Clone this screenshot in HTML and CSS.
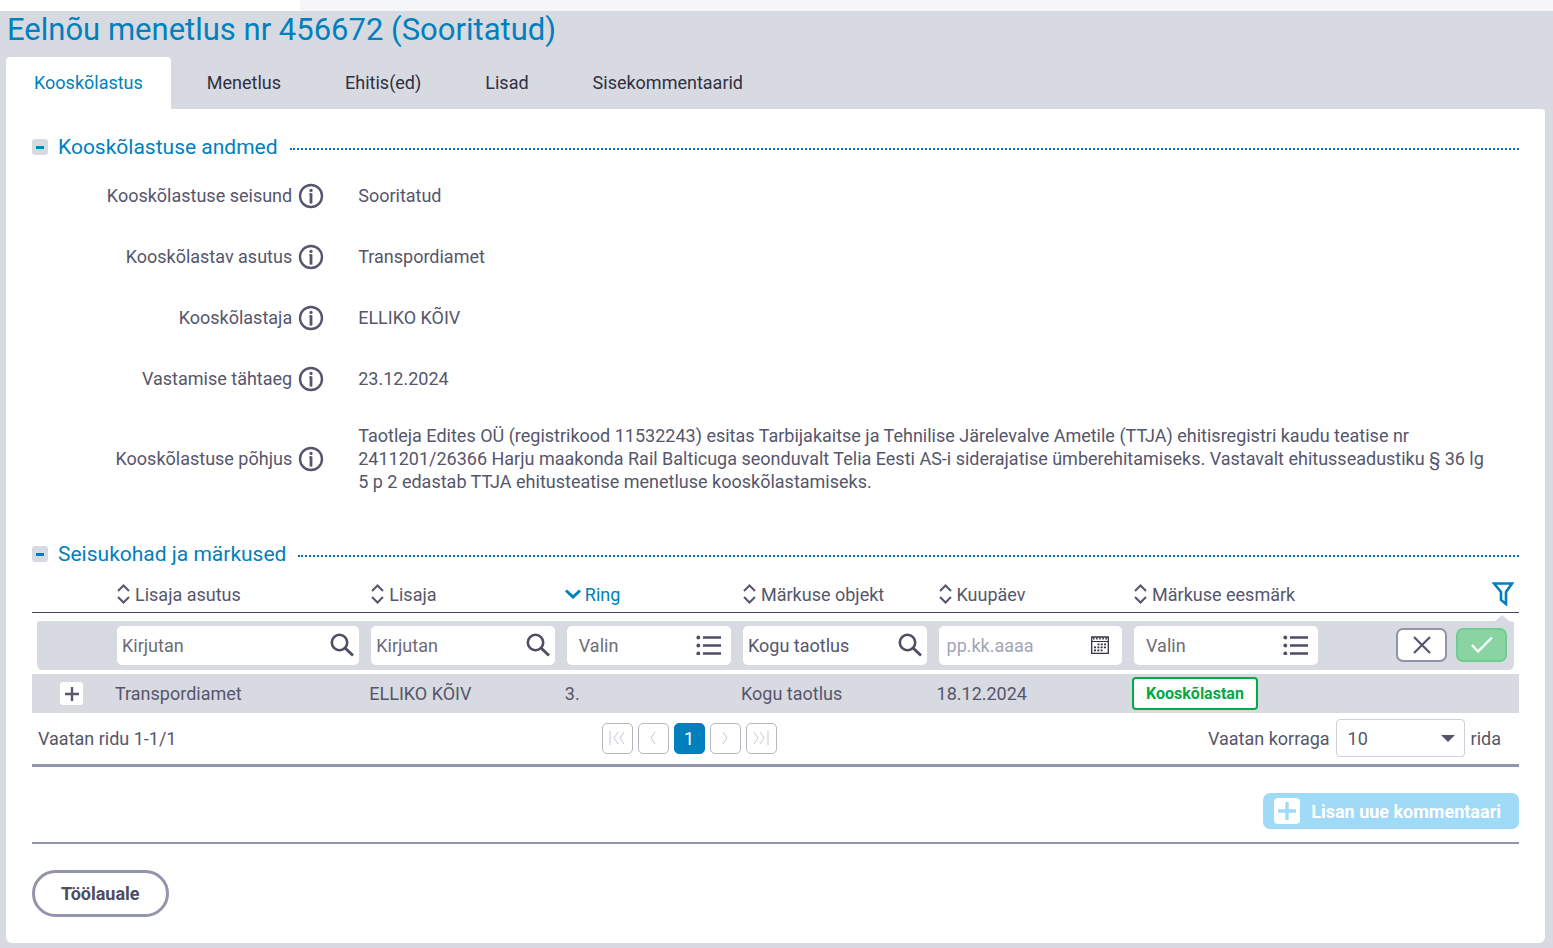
FILE: index.html
```html
<!DOCTYPE html>
<html lang="et">
<head>
    <meta charset="UTF-8">
    <meta name="viewport" content="width=device-width, initial-scale=1.0">
    <title>Eelnõu menetlus nr 456672</title>
    <link rel="stylesheet" href="styles.css">
</head>
<body>
    <svg class="sprite" aria-hidden="true">
        <symbol id="info" viewBox="0 0 26 26">
            <circle cx="13" cy="13" r="11" fill="none" stroke="currentColor" stroke-width="2.4"/>
            <circle cx="13" cy="7.4" r="1.6" fill="currentColor"/>
            <path d="M11.4 11H13v9.5" fill="none" stroke="currentColor" stroke-width="1.4"/>
            <path d="M13 10.4v10" stroke="currentColor" stroke-width="2.8"/>
        </symbol>
        <symbol id="sort" viewBox="0 0 13 20">
            <path d="M1 7l5.5-5.5L12 7M1 13l5.5 5.5L12 13" fill="none" stroke="currentColor" stroke-width="2"/>
        </symbol>
        <symbol id="search" viewBox="0 0 24 24">
            <circle cx="9.5" cy="9.5" r="7.7" fill="none" stroke="currentColor" stroke-width="2.6"/>
            <path d="M15 15l8 7.5" stroke="currentColor" stroke-width="3"/>
        </symbol>
        <symbol id="list" viewBox="0 0 26 20">
            <path d="M7 2.5h18M7 10.5h18M7 18.5h18" stroke="currentColor" stroke-width="2.4"/>
            <circle cx="2.3" cy="2.5" r="1.9" fill="currentColor"/>
            <circle cx="2.3" cy="10.5" r="1.9" fill="currentColor"/>
            <circle cx="2.3" cy="18.5" r="1.9" fill="currentColor"/>
        </symbol>
    </svg>

    <div class="top-bar"></div>
    <h1>Eelnõu menetlus nr 456672 (Sooritatud)</h1>

    <nav class="tabs">
        <a href="#" class="tab active">Kooskõlastus</a>
        <a href="#" class="tab">Menetlus</a>
        <a href="#" class="tab">Ehitis(ed)</a>
        <a href="#" class="tab">Lisad</a>
        <a href="#" class="tab">Sisekommentaarid</a>
    </nav>

    <main class="panel">
        <!-- Kooskõlastuse andmed -->
        <section>
            <div class="section-head">
                <button class="toggle" aria-label="Sulge Kooskõlastuse andmed"></button>
                <h2>Kooskõlastuse andmed</h2>
            </div>
            <dl class="details">
                <div class="detail">
                    <dt>Kooskõlastuse seisund <svg class="info"><use href="#info"/></svg></dt>
                    <dd>Sooritatud</dd>
                </div>
                <div class="detail">
                    <dt>Kooskõlastav asutus <svg class="info"><use href="#info"/></svg></dt>
                    <dd>Transpordiamet</dd>
                </div>
                <div class="detail">
                    <dt>Kooskõlastaja <svg class="info"><use href="#info"/></svg></dt>
                    <dd>ELLIKO KÕIV</dd>
                </div>
                <div class="detail">
                    <dt>Vastamise tähtaeg <svg class="info"><use href="#info"/></svg></dt>
                    <dd>23.12.2024</dd>
                </div>
                <div class="detail">
                    <dt>Kooskõlastuse põhjus <svg class="info"><use href="#info"/></svg></dt>
                    <dd>Taotleja Edites OÜ (registrikood 11532243) esitas Tarbijakaitse ja Tehnilise Järelevalve Ametile (TTJA) ehitisregistri kaudu teatise nr 2411201/26366 Harju maakonda Rail Balticuga seonduvalt Telia Eesti AS-i siderajatise ümberehitamiseks. Vastavalt ehitusseadustiku § 36 lg 5 p 2 edastab TTJA ehitusteatise menetluse kooskõlastamiseks.</dd>
                </div>
            </dl>
        </section>

        <!-- Seisukohad ja märkused -->
        <section class="comments">
            <div class="section-head">
                <button class="toggle" aria-label="Sulge Seisukohad ja märkused"></button>
                <h2>Seisukohad ja märkused</h2>
            </div>
            <table>
                <thead>
                    <tr class="head-row">
                        <th class="col-expand"></th>
                        <th class="col-org"><button class="sort"><svg class="sort-icon"><use href="#sort"/></svg>Lisaja asutus</button></th>
                        <th class="col-mid"><button class="sort"><svg class="sort-icon"><use href="#sort"/></svg>Lisaja</button></th>
                        <th class="col-ring"><button class="sort sorted"><svg class="sorted-icon" viewBox="0 0 16 10"><path d="M1 1.5l7 6.5 7-6.5" fill="none" stroke="currentColor" stroke-width="3"/></svg>Ring</button></th>
                        <th class="col-mid"><button class="sort"><svg class="sort-icon"><use href="#sort"/></svg>Märkuse objekt</button></th>
                        <th class="col-mid"><button class="sort"><svg class="sort-icon"><use href="#sort"/></svg>Kuupäev</button></th>
                        <th class="col-mid"><button class="sort"><svg class="sort-icon"><use href="#sort"/></svg>Märkuse eesmärk</button></th>
                        <th class="col-actions">
                            <button class="filter-btn" aria-label="Filter">
                                <svg viewBox="0 0 22 24"><path d="M2 1.5h18l-6 8.5v12l-5-4V10z" fill="none" stroke="currentColor" stroke-width="2.6"/></svg>
                            </button>
                        </th>
                    </tr>
                </thead>
                <tbody>
                    <tr class="filter-row">
                        <td></td>
                        <td><div class="field"><input type="text" placeholder="Kirjutan" aria-label="Lisaja asutus"><svg class="search"><use href="#search"/></svg></div></td>
                        <td><div class="field"><input type="text" placeholder="Kirjutan" aria-label="Lisaja"><svg class="search"><use href="#search"/></svg></div></td>
                        <td><button class="field pick">Valin<svg class="list"><use href="#list"/></svg></button></td>
                        <td><div class="field"><input type="text" value="Kogu taotlus" aria-label="Märkuse objekt"><svg class="search"><use href="#search"/></svg></div></td>
                        <td>
                            <div class="field date">
                                <input type="text" placeholder="pp.kk.aaaa" aria-label="Kuupäev">
                                <svg class="calendar" viewBox="0 0 18 18">
                                    <path d="M.7 1h16.6v16.3H.7z" fill="none" stroke="#333340" stroke-width="1.3"/>
                                    <path d="M1 5.5h16" stroke="#333340"/>
                                    <path d="M2 2.4h14" stroke="#333340" stroke-width="2" stroke-dasharray="1.5 1.6"/>
                                    <path d="M6.5 8.3h8.5M3 11.3h12M3 14.3h8.5" stroke="#333340" stroke-width="1.7" stroke-dasharray="2 1.3"/>
                                </svg>
                            </div>
                        </td>
                        <td><button class="field pick">Valin<svg class="list"><use href="#list"/></svg></button></td>
                        <td>
                            <div class="filter-actions">
                                <button class="clear" aria-label="Tühista"><svg viewBox="0 0 18 18"><path d="M1 1l16 16M17 1L1 17" stroke="currentColor" stroke-width="2.2"/></svg></button>
                                <button class="apply" aria-label="Rakenda"><svg viewBox="0 0 22 18"><path d="M1 9l6 6.5L21 1.5" fill="none" stroke="currentColor" stroke-width="2.4"/></svg></button>
                            </div>
                        </td>
                    </tr>
                    <tr class="data-row">
                        <td><button class="expand" aria-label="Ava rida"><svg viewBox="0 0 14 14"><path d="M7 0v14M0 7h14" stroke="currentColor" stroke-width="2.4"/></svg></button></td>
                        <td>Transpordiamet</td>
                        <td>ELLIKO KÕIV</td>
                        <td>3.</td>
                        <td>Kogu taotlus</td>
                        <td>18.12.2024</td>
                        <td><span class="badge">Kooskõlastan</span></td>
                        <td></td>
                    </tr>
                </tbody>
            </table>

            <div class="table-footer">
                <div>Vaatan ridu 1-1/1</div>
                <div class="pages">
                    <button class="page" aria-label="Esimene"><svg viewBox="0 0 16 14"><path d="M1 0v14M9 1L5 7l4 6M15 1l-4 6 4 6"/></svg></button>
                    <button class="page" aria-label="Eelmine"><svg viewBox="0 0 16 14"><path d="M10 1L6 7l4 6"/></svg></button>
                    <button class="page current">1</button>
                    <button class="page" aria-label="Järgmine"><svg viewBox="0 0 16 14"><path d="M6 1l4 6-4 6"/></svg></button>
                    <button class="page" aria-label="Viimane"><svg viewBox="0 0 16 14"><path d="M1 1l4 6-4 6M7 1l4 6-4 6M15 0v14"/></svg></button>
                </div>
                <div class="per-page">
                    <label for="rows">Vaatan korraga</label>
                    <div class="select">
                        <select id="rows">
                            <option>10</option>
                            <option>25</option>
                            <option>50</option>
                        </select>
                    </div>
                    <span>rida</span>
                </div>
            </div>
        </section>

        <div class="add-row">
            <button class="add" disabled>
                <svg viewBox="0 0 26 26"><rect width="26" height="26" rx="4" fill="#fff"/><path d="M13 4v18M4 13h18" stroke="#9fdaf6" stroke-width="3.4"/></svg>
                Lisan uue kommentaari
            </button>
        </div>

        <div class="bottom-row">
            <a href="#" class="back">Töölauale</a>
        </div>
    </main>
</body>
</html>
```
FILE: styles.css
```css
* {
    box-sizing: border-box;
}
body {
    margin: 0;
    padding-bottom: 5px;
    background: #d8dae2;
    color: #55566b;
    font-family: Roboto, sans-serif;
    font-size: 18px;
    line-height: 23px;
}
button, input, select {
    font: inherit;
    color: inherit;
}
button {
    padding: 0;
    border: none;
    background: none;
    cursor: pointer;
}
svg {
    flex: none;
}
.sprite {
    display: none;
}

.top-bar {
    height: 11px;
    background: linear-gradient(to right, #fff 300px, #f6f6f9 300px);
}
h1 {
    margin: 0;
    padding: 0 7px;
    font-size: 31px;
    font-weight: 400;
    line-height: 38px;
    color: #0080bd;
}
.tabs {
    display: flex;
    gap: 8px;
    margin: 8px 6px 0;
}
.tab {
    padding: 14px 28px 15px;
    border-radius: 4px 4px 0 0;
    color: #2f3040;
    text-decoration: none;
}
.tab.active {
    background: #fff;
    color: #0080bd;
}

.panel {
    margin: 0 8px 0 6px;
    padding: 26px 26px;
    background: #fff;
    border-radius: 0 4px 6px 6px;
}

.section-head {
    display: flex;
    align-items: center;
}
.section-head::after {
    content: "";
    flex: 1;
    margin: 4px 0 0 12px;
    border-top: 2px dotted #0075b4;
}
.toggle {
    display: flex;
    align-items: center;
    justify-content: center;
    width: 16px;
    height: 16px;
    margin-right: 10px;
    border-radius: 3px;
    background: #d8dae2;
}
.toggle::before {
    content: "";
    width: 8px;
    height: 3px;
    background: #0080bd;
}
h2 {
    margin: 0;
    font-size: 21px;
    font-weight: 400;
    line-height: 24px;
    color: #0080bd;
}

/* label / value rows */
.details {
    margin: 6px 0 0;
}
.detail {
    display: flex;
    align-items: center;
    gap: 34px;
    min-height: 61px;
    padding: 15px 26px 15px 0;
}
dt {
    display: flex;
    flex: none;
    align-items: center;
    justify-content: flex-end;
    gap: 6px;
    width: 20%;
}
dd {
    flex: 1;
    margin: 0;
}
.info {
    width: 26px;
    height: 26px;
}

/* table */
.comments {
    margin-top: 34px;
}
table {
    width: 100%;
    margin-top: 10px;
    table-layout: fixed;
    border-spacing: 0;
}
th, td {
    padding: 0 5px;
    text-align: left;
    font-weight: 400;
}
.head-row th {
    height: 37px;
    border-bottom: 1px solid #44465c;
}
.col-expand {
    width: 78px;
}
.col-org {
    width: 17.1%;
}
.col-mid {
    width: 13.15%;
}
.col-ring {
    width: 11.85%;
}
.sort {
    display: flex;
    align-items: center;
    gap: 5px;
    padding-left: 2px;
    white-space: nowrap;
}
.sort-icon {
    width: 13px;
    height: 20px;
}
.sorted {
    gap: 4px;
    padding-left: 0;
    color: #0080bd;
}
.sorted-icon {
    width: 16px;
    height: 10px;
}
.col-actions {
    text-align: right;
}
.filter-btn {
    display: block;
    margin-left: auto;
    color: #0080bd;
}
.filter-btn svg {
    display: block;
    width: 22px;
    height: 24px;
}
.filter-row td {
    height: 61px;
    padding: 4px 5px 5px 7px;
    border: 0 solid transparent;
    border-width: 8px 0 4px;
    background: #d8dae2;
    background-clip: padding-box;
}
.filter-row td:first-child {
    border-left-width: 5px;
    border-radius: 10px 0 0 10px;
}
.filter-row td:last-child {
    position: relative;
    border-right-width: 5px;
    border-radius: 0 10px 10px 0;
}
/* arrow that points at the filter icon */
.filter-row td:last-child::before {
    content: "";
    position: absolute;
    top: -6px;
    right: 5px;
    border: 7px solid transparent;
    border-top: 0;
    border-bottom: 6px solid #d8dae2;
}
.field {
    display: flex;
    align-items: center;
    width: 100%;
    height: 39px;
    padding: 0 5px;
    border-radius: 5px;
    background: #fff;
}
.field input {
    flex: 1;
    width: 0;
    padding: 0;
    border: 0;
    outline: 0;
    background: none;
}
.field input::placeholder {
    color: #6c6c78;
}
.pick {
    justify-content: space-between;
    padding: 0 9px 0 12px;
    color: #6c6c78;
}
.date {
    padding: 0 13px 0 8px;
}
.field.date input::placeholder {
    color: #a3a5b6;
}
.search {
    width: 24px;
    height: 24px;
    color: #4d4e63;
}
.list {
    width: 26px;
    height: 20px;
    color: #4d4e63;
}
.calendar {
    width: 18px;
    height: 18px;
}
.filter-actions {
    display: flex;
    justify-content: flex-end;
    gap: 9px;
    padding-right: 2px;
}
.clear, .apply {
    display: flex;
    align-items: center;
    justify-content: center;
    width: 51px;
    height: 34px;
    border: 2px solid #9193ab;
    border-radius: 7px;
    background: #fff;
}
.clear svg {
    width: 18px;
    height: 18px;
}
.apply {
    border-color: #72cb91;
    background: #8ad3a2;
    color: #fff;
}
.apply svg {
    width: 22px;
    height: 18px;
}
.data-row td {
    height: 39px;
    background: #d8dae2;
}
.expand {
    display: flex;
    align-items: center;
    justify-content: center;
    width: 23px;
    height: 23px;
    margin-left: auto;
    margin-right: 22px;
    border-radius: 3px;
    background: #fff;
}
.expand svg {
    width: 14px;
    height: 14px;
}
.badge {
    display: inline-block;
    padding: 3px 12px;
    border: 2px solid #00aa46;
    border-radius: 4px;
    background: #fff;
    color: #00aa46;
    font-size: 16px;
    font-weight: 700;
}

.table-footer {
    display: grid;
    grid-template-columns: 7fr auto 9fr;
    align-items: center;
    padding: 6px 18px 7px 6px;
    border-bottom: 3px solid #9395ab;
}
.pages {
    display: flex;
    gap: 5px;
}
.page {
    display: flex;
    align-items: center;
    justify-content: center;
    width: 31px;
    height: 31px;
    border: 1px solid #b5b7c0;
    border-radius: 5px;
}
.page svg {
    width: 16px;
    height: 14px;
    fill: none;
    stroke: #c6c8d0;
}
.page.current {
    border-color: #0080bd;
    background: #0080bd;
    color: #fff;
}
.per-page {
    display: flex;
    align-items: center;
    justify-content: flex-end;
    gap: 6px;
}
.select {
    position: relative;
}
.select::after {
    content: "";
    position: absolute;
    top: 16px;
    right: 10px;
    border: 7px solid transparent;
    border-top-color: #55566b;
    border-bottom: 0;
    pointer-events: none;
}
select {
    display: block;
    width: 129px;
    height: 38px;
    padding: 0 11px;
    border: 1px solid #cdd0da;
    border-radius: 4px;
    background: #fff;
    appearance: none;
}

.add-row {
    display: flex;
    justify-content: flex-end;
    padding: 26px 0 13px;
    border-bottom: 2px solid #9395ab;
}
.add {
    display: flex;
    align-items: center;
    gap: 11px;
    height: 36px;
    padding: 0 18px 0 11px;
    border-radius: 7px;
    background: #9fdaf6;
    color: #fff;
    font-weight: 700;
}
.add svg {
    width: 26px;
    height: 26px;
}
.bottom-row {
    display: flex;
    padding-top: 26px;
}
.back {
    padding: 9px 26px;
    border: 3px solid #9395ab;
    border-radius: 24px;
    color: #4d4e63;
    font-weight: 700;
    text-decoration: none;
}
```
